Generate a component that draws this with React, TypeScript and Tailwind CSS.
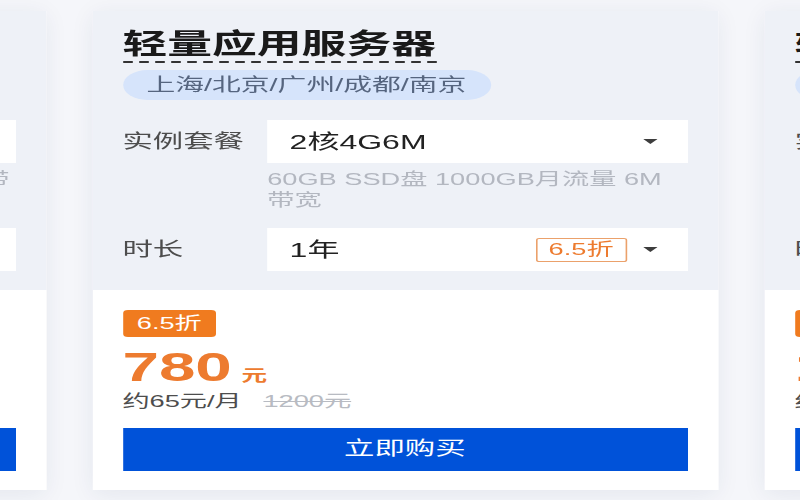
import { ReactNode } from "react";

type Plan = {
  title: string;
  regions: string;
  spec: string;
  desc: string;
  term: string;
  discount: string;
  price: string;
  monthly: string;
  original: string;
};

const plans: Plan[] = [
  {
    title: "云服务器CVM",
    regions: "上海/北京/广州/成都/南京",
    spec: "2核2G4M",
    desc: "40GB SSD盘 600GB月流量 4M 带宽",
    term: "1年",
    discount: "6.5折",
    price: "520",
    monthly: "约43元/月",
    original: "800元",
  },
  {
    title: "轻量应用服务器",
    regions: "上海/北京/广州/成都/南京",
    spec: "2核4G6M",
    desc: "60GB SSD盘 1000GB月流量 6M 带宽",
    term: "1年",
    discount: "6.5折",
    price: "780",
    monthly: "约65元/月",
    original: "1200元",
  },
  {
    title: "轻量数据库",
    regions: "上海/北京/广州/成都/南京",
    spec: "4核8G10M",
    desc: "100GB SSD盘 2000GB月流量 10M 带宽",
    term: "1年",
    discount: "6.5折",
    price: "1560",
    monthly: "约130元/月",
    original: "2400元",
  },
];

function Caret() {
  return (
    <svg width="9" height="5" viewBox="0 0 9 5" className="shrink-0">
      <path d="M0 0 H9 L4.5 5 Z" fill="#3d3d3d" />
    </svg>
  );
}

function Row({ label, children }: { label: string; children: ReactNode }) {
  return (
    <div className="flex">
      <div className="w-[90.5px] shrink-0 h-[43px] flex items-center pt-[2px] text-[19px] text-[#4d4d4d]">
        {label}
      </div>
      <div className="flex-1 min-w-0">{children}</div>
    </div>
  );
}

function Card({ plan }: { plan: Plan }) {
  return (
    <div className="w-[391px] shrink-0 flex flex-col bg-white shadow-[0_4px_18px_rgba(30,50,90,0.08)]">
      <div className="bg-[#eef1f7] px-[19px] pt-[18px] pb-[19px]">
        <div>
          <span className="inline-block text-[28px] leading-[31px] font-bold text-[#1a1a1a] pb-[1px] border-b-2 border-dashed border-[#333]">
            {plan.title}
          </span>
        </div>
        <div className="mt-[7px] inline-flex h-[30px] items-center rounded-full bg-[#d6e4fb] px-[15px] text-[18px] text-[#56657f]">
          {plan.regions}
        </div>
        <div className="mt-[20px]">
          <Row label="实例套餐">
            <div className="h-[43px] bg-white flex items-center pl-[14px] pr-[19px] text-[20px] text-[#222]">
              <span className="flex-1">{plan.spec}</span>
              <Caret />
            </div>
            <div className="mt-[6px] text-[17px] leading-[21px] text-[#b3b7c0]">{plan.desc}</div>
          </Row>
        </div>
        <div className="mt-[17px]">
          <Row label="时长">
            <div className="h-[43px] bg-white flex items-center pl-[14px] pr-[19px] text-[20px] text-[#222]">
              <span className="flex-1">{plan.term}</span>
              <span className="h-[24px] flex items-center px-[7px] border border-[#eba16b] rounded-[2px] text-[17px] text-[#ed7b2f] mr-[10px]">
                {plan.discount}
              </span>
              <Caret />
            </div>
          </Row>
        </div>
      </div>
      <div className="bg-white px-[19px] pt-[20px] pb-[19px]">
        <div className="inline-flex h-[27px] items-center rounded-[3px] bg-[#f07b1f] px-[9px] text-[17px] text-white">
          {plan.discount}
        </div>
        <div className="mt-[10px] flex items-baseline text-[#ed7b2f]">
          <span className="text-[41px] leading-[41px] font-bold">{plan.price}</span>
          <span className="ml-[6px] text-[16px] font-bold">元</span>
        </div>
        <div className="mt-[3px] flex items-center text-[17px] leading-[22px]">
          <span className="text-[#4d4d4d]">{plan.monthly}</span>
          <span className="ml-[13.5px] text-[#b8bbc2] line-through">{plan.original}</span>
        </div>
        <button className="mt-[15px] w-full h-[43px] bg-[#0052d9] text-white text-[19px]">
          立即购买
        </button>
      </div>
    </div>
  );
}

export default function App() {
  return (
    <div
      className="w-[800px] h-[500px] overflow-hidden bg-[#f5f6fa]"
      style={{ fontFamily: '"Liberation Sans", "Noto Sans CJK SC", sans-serif' }}
    >
      <div className="w-[500px] origin-top-left scale-x-[1.6] pt-[11px]">
        <div className="flex gap-[29px] -ml-[362.5px]">
          {plans.map((p) => (
            <Card key={p.title} plan={p} />
          ))}
        </div>
      </div>
    </div>
  );
}
